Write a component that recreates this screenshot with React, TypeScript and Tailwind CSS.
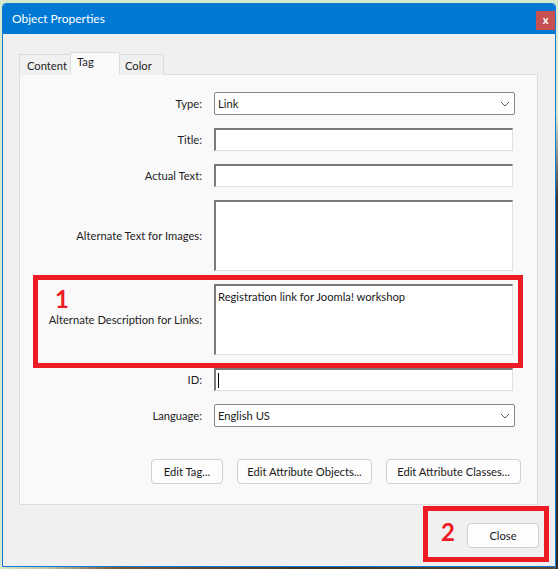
import React from "react";

const font = { fontFamily: 'Lato, "Noto Sans", sans-serif' };

function Chevron() {
  return (
    <svg width="10" height="6" viewBox="0 0 10 6" className="mr-[4px]">
      <polyline points="1,1 5,5 9,1" fill="none" stroke="#5a5a5a" strokeWidth="1" />
    </svg>
  );
}

function Label({ children }: { children: React.ReactNode }) {
  return (
    <div className="w-[182px] text-right text-[11.2px] leading-[16px] text-[#1e1e1e] shrink-0">{children}</div>
  );
}

function TextBox({ h, children }: { h: string; children?: React.ReactNode }) {
  return (
    <div
      className={`ml-[12px] w-[299px] ${h} bg-white border-t-2 border-l-2 border-t-[#7a7a7a] border-l-[#7a7a7a] border-r border-b border-r-[#e0e0e0] border-b-[#e0e0e0] text-[11.2px] leading-[16px] text-[#1a1a1a] pl-[1px] pt-[2px]`}
    >
      {children}
    </div>
  );
}

function Select({ value }: { value: string }) {
  return (
    <div className="ml-[12px] w-[301px] h-[23px] bg-white border border-[#858585] rounded-[2px] flex items-center justify-between pl-[3px] text-[11.2px] leading-[16px] text-[#1a1a1a]">
      <span>{value}</span>
      <Chevron />
    </div>
  );
}

function Btn({ w, children }: { w: string; children: React.ReactNode }) {
  return (
    <div
      className={`${w} h-[25px] bg-[#fdfdfd] border border-[#d0d0d0] rounded-[4px] flex items-center justify-center text-[11.2px] leading-[16px] text-[#1a1a1a]`}
    >
      {children}
    </div>
  );
}

export default function App() {
  return (
    <div className="relative w-[558px] h-[569px] overflow-hidden bg-[#d4ebcf] flex" style={font}>
      <div className="w-[556px] flex flex-col pl-[2px] pt-[3px]">
        <div className="w-[554px] h-[564px] border border-[#1479d2] rounded-t-[4px] flex flex-col bg-[#f0f0f0] overflow-hidden">
          {/* Title bar */}
          <div className="h-[30px] bg-[#0078d4] flex items-start justify-between shrink-0">
            <div className="pl-[9px] pt-[6px] text-[12px] leading-[18px] text-white">Object Properties</div>
            <div className="mt-[7px] w-[19px] h-[19px] bg-[#c75050] flex items-center justify-center text-white text-[11px] font-bold leading-none pb-[2px]">
              x
            </div>
          </div>
          {/* Body */}
          <div className="flex-1 flex flex-col px-[16px] pt-[18px]">
            {/* Tabs */}
            <div className="flex items-end h-[23px] relative z-10 -mb-px">
              <div className="w-[51px] h-[21px] border-l border-t border-[#dcdcdc] bg-[#f0f0f0] pl-[7px] pt-[3px] text-[11.2px] leading-[16px] text-[#1e1e1e]">
                Content
              </div>
              <div className="w-[50px] h-[23px] border-l border-t border-r border-[#dcdcdc] bg-[#f9f9f9] pl-[6px] pt-[1px] text-[11.2px] leading-[16px] text-[#1e1e1e]">
                Tag
              </div>
              <div className="w-[44px] h-[21px] border-t border-r border-[#dcdcdc] bg-[#f0f0f0] pl-[5px] pt-[3px] text-[11.2px] leading-[16px] text-[#1e1e1e]">
                Color
              </div>
            </div>
            {/* Panel */}
            <div className="w-[519px] h-[431px] border border-[#dedede] bg-[#f9f9f9] flex flex-col gap-[13px] pt-[17px]">
              <div className="flex items-center">
                <Label>Type:</Label>
                <Select value="Link" />
              </div>
              <div className="flex items-center">
                <Label>Title:</Label>
                <TextBox h="h-[23px]" />
              </div>
              <div className="flex items-center">
                <Label>Actual Text:</Label>
                <TextBox h="h-[23px]" />
              </div>
              <div className="flex items-center">
                <Label>Alternate Text for Images:</Label>
                <TextBox h="h-[71px]" />
              </div>
              <div className="flex items-center">
                <Label>Alternate Description for Links:</Label>
                <TextBox h="h-[71px]">
                  <div className="pl-[1px] pt-[1px]">Registration link for Joomla! workshop</div>
                </TextBox>
              </div>
              <div className="flex items-center">
                <Label>ID:</Label>
                <TextBox h="h-[23px]">
                  <div className="ml-[1px] mt-[1px] w-px h-[15px] bg-black" />
                </TextBox>
              </div>
              <div className="flex items-center">
                <Label>Language:</Label>
                <Select value="English US" />
              </div>
              <div className="flex justify-end gap-[14px] pr-[16px] mt-[19px]">
                <Btn w="w-[72px]">Edit Tag...</Btn>
                <Btn w="w-[135px]">Edit Attribute Objects...</Btn>
                <Btn w="w-[135px]">Edit Attribute Classes...</Btn>
              </div>
            </div>
            {/* Footer */}
            <div className="flex justify-end mt-[18px]">
              <Btn w="w-[72px]">Close</Btn>
            </div>
          </div>
        </div>
        <div className="h-[2px] bg-[linear-gradient(90deg,#cfe3c6_0%,#b9c7a8_8%,#7a5a3a_20%,#3e3326_55%,#5c4a34_100%)]" />
      </div>
      <div className="w-[2px] h-full bg-[linear-gradient(180deg,#d4ebcf_0%,#d4ebcf_20%,#3a3a2e_35%,#2e2c24_100%)]" />

      {/* Annotations */}
      <div className="absolute left-[33px] top-[275px] w-[490px] h-[93px] border-[5px] border-[#ed1c24]" />
      <div className="absolute left-[55px] top-[287px] text-[24px] leading-[24px] font-bold text-[#ed1c24]">1</div>
      <div className="absolute left-[423px] top-[506px] w-[126px] h-[56px] border-[5px] border-[#ed1c24]" />
      <div className="absolute left-[441px] top-[520px] text-[24px] leading-[24px] font-bold text-[#ed1c24]">2</div>
    </div>
  );
}
